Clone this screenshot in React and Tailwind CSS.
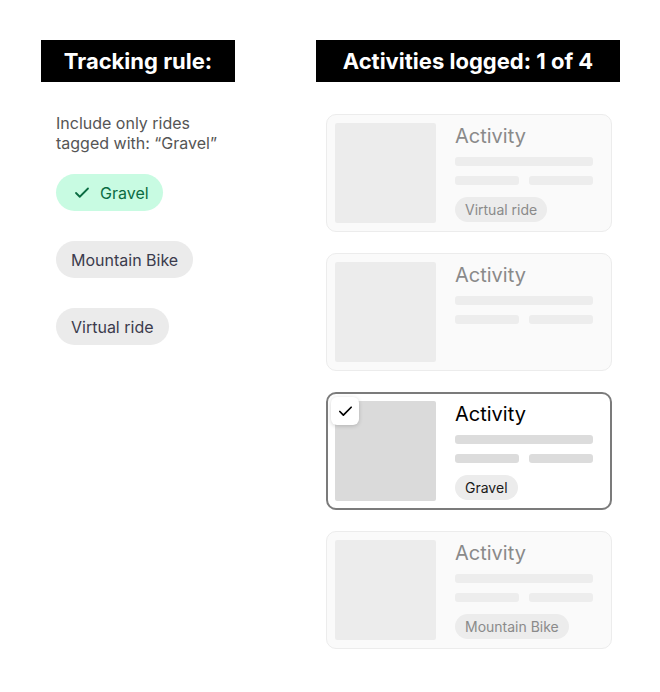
import { Check } from 'lucide-react';

const activities = [
  { id: 1, tag: 'Virtual ride', selected: false },
  { id: 2, tag: null, selected: false },
  { id: 3, tag: 'Gravel', selected: true },
  { id: 4, tag: 'Mountain Bike', selected: false },
];

function ActivityCard({ tag, selected }) {
  const bar = selected ? 'bg-[#dcdcdc]' : 'bg-[#ededed]';
  return (
    <div
      className={`relative flex h-[118px] gap-[19px] rounded-[10px] ${
        selected
          ? 'border-2 border-[#7b7b7b] bg-white p-[7px]'
          : 'border border-[#ececec] bg-[#fafafa] p-2'
      }`}
    >
      {selected && (
        <div className="absolute left-[3px] top-[3px] flex h-7 w-7 items-center justify-center rounded-md bg-white shadow-[0_1px_4px_rgba(0,0,0,0.18)]">
          <Check size={17} strokeWidth={2.4} className="text-black" />
        </div>
      )}
      <div className={`h-full w-[101px] shrink-0 rounded-[2px] ${selected ? 'bg-[#dadada]' : 'bg-[#ececec]'}`} />
      <div className="flex flex-1 flex-col pr-[10px]">
        <div
          className={`mt-[1px] shrink-0 text-[20px] leading-[24px] ${
            selected ? 'text-black' : 'text-[#8a8a8a]'
          }`}
        >
          Activity
        </div>
        <div className={`mt-[9px] h-[9px] shrink-0 rounded-[3px] ${bar}`} />
        <div className="mt-[10px] flex shrink-0 gap-[10px]">
          <div className={`h-[9px] flex-1 rounded-[3px] ${bar}`} />
          <div className={`h-[9px] flex-1 rounded-[3px] ${bar}`} />
        </div>
        {tag && (
          <div
            className={`mt-[12px] shrink-0 self-start rounded-full bg-[#ececec] px-[10px] text-[14px] leading-[25px] ${
              selected ? 'text-[#1a1a1a]' : 'text-[#8a8a8a]'
            }`}
          >
            {tag}
          </div>
        )}
      </div>
    </div>
  );
}

export default function App() {
  return (
    <div
      className="flex min-h-[692px] w-[660px] gap-[81px] bg-white pl-[41px] pt-[40px]"
      style={{ fontFamily: 'Inter, "Noto Sans", sans-serif' }}
    >
      <div className="w-[194px]">
        <div className="flex h-[42px] items-center justify-center bg-black text-[22px] font-bold text-white">
          Tracking rule:
        </div>
        <div className="pl-[15px]">
          <p className="mt-[31px] text-[16px] leading-[20px] text-[#555]">
            Include only rides
            <br />
            tagged with: “Gravel”
          </p>
          <div className="mt-[21px] flex flex-col items-start gap-[30px]">
            <div className="flex h-[37px] items-center gap-[9px] rounded-full bg-[#c8fbe2] pl-[17px] pr-[14px] text-[16px] text-[#0b6b42]">
              <Check size={18} strokeWidth={2.4} />
              Gravel
            </div>
            <div className="flex h-[37px] items-center rounded-full bg-[#ebebeb] px-[15px] text-[16px] text-[#3b3b4d]">
              Mountain Bike
            </div>
            <div className="flex h-[37px] items-center rounded-full bg-[#ebebeb] px-[15px] text-[16px] text-[#3b3b4d]">
              Virtual ride
            </div>
          </div>
        </div>
      </div>
      <div className="w-[304px]">
        <div className="flex h-[42px] items-center justify-center bg-black text-[22px] font-bold text-white">
          Activities logged: 1 of 4
        </div>
        <div className="mt-[32px] flex flex-col gap-[21px] pl-[10px] pr-[8px]">
          {activities.map((a) => (
            <ActivityCard key={a.id} tag={a.tag} selected={a.selected} />
          ))}
        </div>
      </div>
    </div>
  );
}
